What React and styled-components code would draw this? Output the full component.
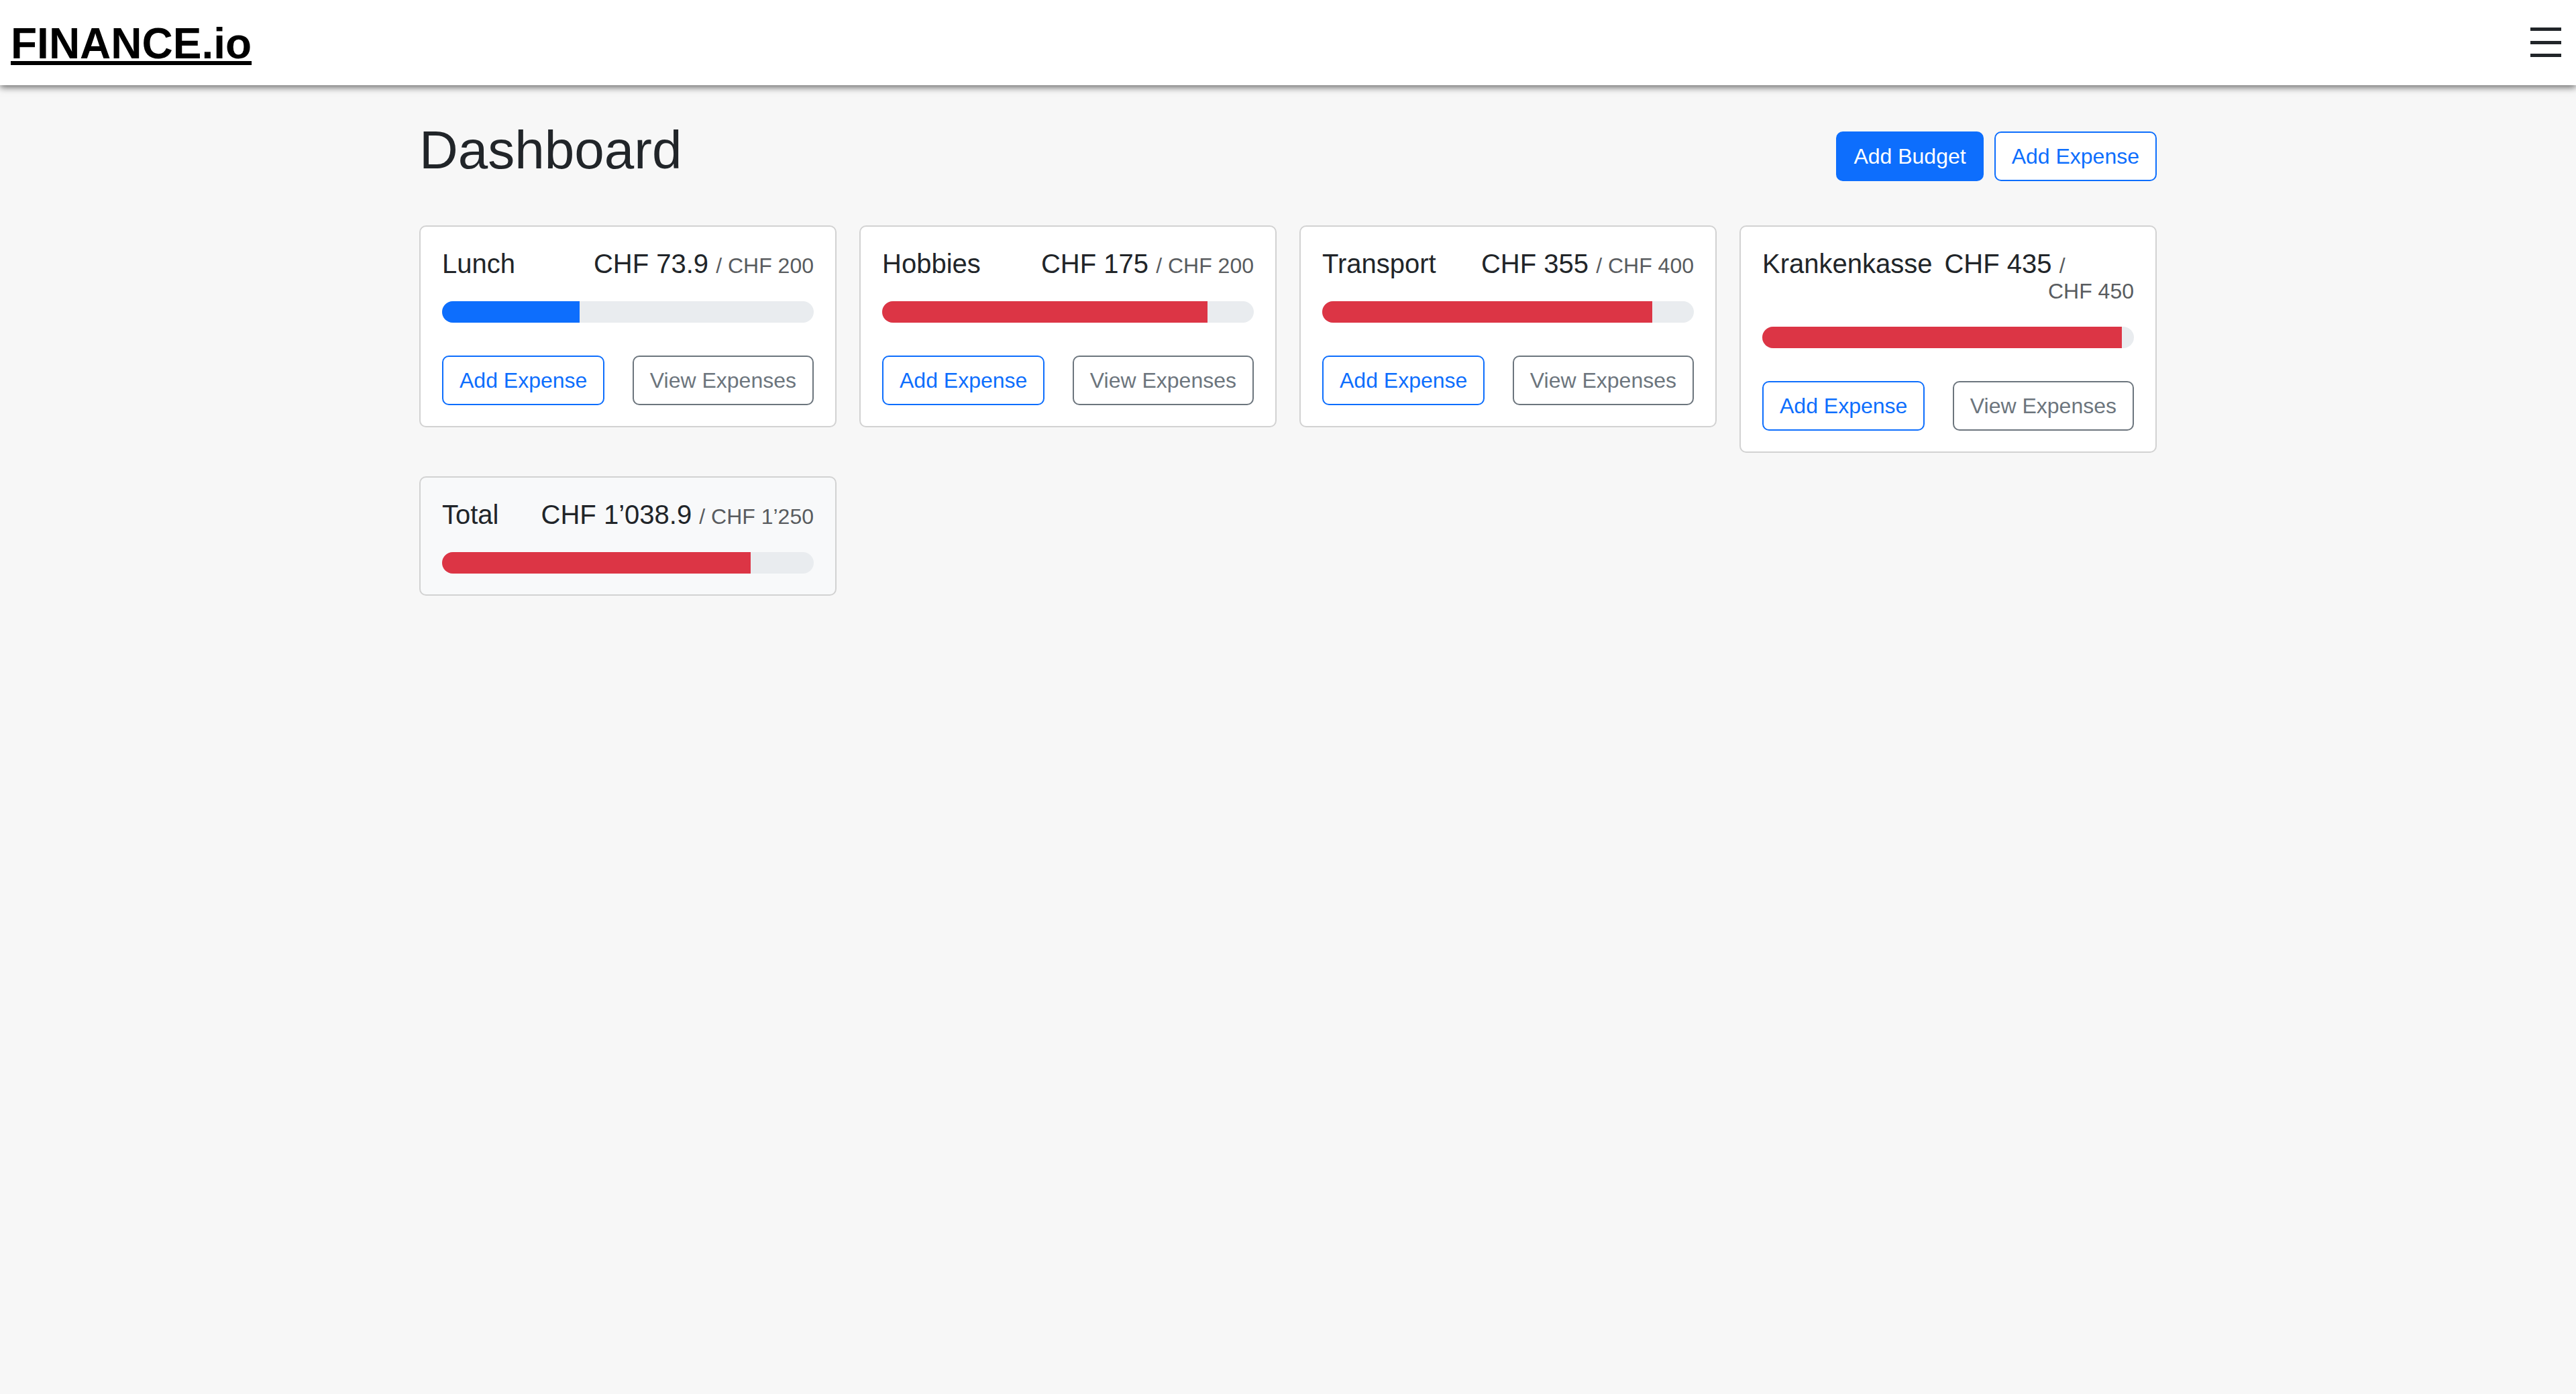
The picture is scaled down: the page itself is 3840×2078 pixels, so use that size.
import React from 'react';
import styled, { createGlobalStyle } from 'styled-components';

const GlobalStyle = createGlobalStyle`
  html, body {
    margin: 0;
    padding: 0;
    background: #f7f7f7;
    font-family: "Liberation Sans", Arial, sans-serif;
    color: #212529;
  }
  * { box-sizing: border-box; }
`;

const budgets = [
  { name: 'Lunch', spent: 'CHF\u00a073.9', max: 'CHF\u00a0200', pct: 36.95, over: false },
  { name: 'Hobbies', spent: 'CHF\u00a0175', max: 'CHF\u00a0200', pct: 87.5, over: true },
  { name: 'Transport', spent: 'CHF\u00a0355', max: 'CHF\u00a0400', pct: 88.75, over: true },
  { name: 'Krankenkasse', spent: 'CHF\u00a0435', max: 'CHF\u00a0450', pct: 96.67, over: true },
];

const App = () => (
  <>
    <GlobalStyle />
    <Navbar>
      <Brand href="#">FINANCE.io</Brand>
      <Toggler aria-label="menu">
        <svg width="46" height="45" viewBox="0 0 46 45">
          <rect x="0" y="0" width="46" height="5" fill="#212529" />
          <rect x="0" y="20" width="46" height="5" fill="#212529" />
          <rect x="0" y="39" width="46" height="5" fill="#212529" />
        </svg>
      </Toggler>
    </Navbar>
    <Main>
      <PageHeader>
        <Heading>Dashboard</Heading>
        <Actions>
          <Button variant="primary">Add Budget</Button>
          <Button variant="outline">Add Expense</Button>
        </Actions>
      </PageHeader>
      <Grid>
        {budgets.map((b) => (
          <Card key={b.name}>
            <CardHeader>
              <Title>{b.name}</Title>
              <Amount>
                {b.spent} <Max>/ {b.max}</Max>
              </Amount>
            </CardHeader>
            <Progress>
              <Bar $over={b.over} style={{ width: `${b.pct}%` }} />
            </Progress>
            <CardActions>
              <Button variant="outline">Add Expense</Button>
              <Button variant="secondary">View Expenses</Button>
            </CardActions>
          </Card>
        ))}
        <Card $muted>
          <CardHeader>
            <Title>Total</Title>
            <Amount>
              CHF{'\u00a0'}1’038.9 <Max>/ CHF{'\u00a0'}1’250</Max>
            </Amount>
          </CardHeader>
          <Progress>
            <Bar $over style={{ width: '83.1%' }} />
          </Progress>
        </Card>
      </Grid>
    </Main>
  </>
);

export default App;

const Navbar = styled.nav`
  height: 127px;
  background: #fff;
  display: flex;
  align-items: center;
  justify-content: space-between;
  padding: 0 22px 0 16px;
  box-shadow: 0 3px 10px rgba(0, 0, 0, 0.6);
  position: relative;
`;

const Brand = styled.a`
  font-size: 64px;
  font-weight: 700;
  line-height: 1.2;
  color: #000;
  text-decoration: underline;
  padding-top: 3px;
`;

const Toggler = styled.button`
  border: 0;
  background: none;
  padding: 0;
  display: flex;
  align-items: center;
`;

const Main = styled.main`
  width: 2590px;
  margin: 0 auto;
  padding-top: 49px;
`;

const PageHeader = styled.div`
  display: flex;
  justify-content: space-between;
  align-items: flex-end;
`;

const Heading = styled.h2`
  margin: 0;
  font-size: 80px;
  font-weight: 400;
  line-height: 96px;
`;

const Actions = styled.div`
  display: flex;
  gap: 16px;
  margin-bottom: 2px;
`;

const Button = styled.button`
  font-family: "Liberation Sans", Arial, sans-serif;
  font-size: 32px;
  line-height: 48px;
  padding: 11px 24px;
  border-radius: 10px;
  border: 2px solid ${(p) => (p.variant === 'secondary' ? '#6c757d' : '#0d6efd')};
  background: ${(p) => (p.variant === 'primary' ? '#0d6efd' : '#fff')};
  color: ${(p) =>
    p.variant === 'primary' ? '#fff' : p.variant === 'secondary' ? '#6c757d' : '#0d6efd'};
  cursor: pointer;
`;

const Grid = styled.div`
  margin-top: 64px;
  display: grid;
  grid-template-columns: repeat(4, 1fr);
  column-gap: 34px;
  row-gap: 35px;
  align-items: start;
`;

const Card = styled.div`
  background: ${(p) => (p.$muted ? '#f8f9fa' : '#fff')};
  border: 2px solid #d2d2d2;
  border-radius: 10px;
  padding: 36px 32px 31px;
`;

const CardHeader = styled.div`
  display: flex;
  justify-content: space-between;
  align-items: baseline;
  font-size: 40px;
  line-height: 38px;
`;

const Title = styled.span`
  margin-right: 18px;
  white-space: nowrap;
`;

const Amount = styled.span`
  text-align: left;
  text-align-last: right;
`;

const Max = styled.span`
  font-size: 32px;
  line-height: 1;
  color: #595c5f;
`;

const Progress = styled.div`
  margin-top: 37px;
  height: 32px;
  border-radius: 16px;
  background: #e9ecef;
  overflow: hidden;
  display: flex;
`;

const Bar = styled.div`
  height: 100%;
  background: ${(p) => (p.$over ? '#dc3545' : '#0d6efd')};
`;

const CardActions = styled.div`
  margin-top: 49px;
  display: flex;
  justify-content: space-between;
`;
